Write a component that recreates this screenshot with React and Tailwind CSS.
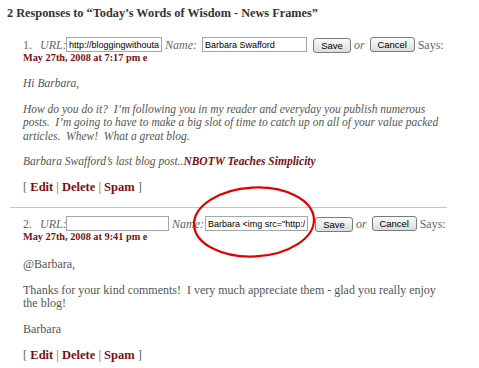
import React from 'react';

const serif = "font-['Liberation_Serif','Times_New_Roman',serif]";

function Field({ value, width }) {
  return (
    <input
      readOnly
      value={value}
      className={`h-[15px] ${width} border border-[#9ea6ae] bg-white px-[2px] text-[9px] leading-[13px] text-black font-['Liberation_Sans',Arial,sans-serif] outline-none`}
    />
  );
}

function Btn({ label, width }) {
  return (
    <span
      className={`inline-flex items-center justify-center h-[15px] ${width} rounded-[3px] border border-[#7a7a7a] bg-gradient-to-b from-[#fbfbfb] to-[#dcdcdc] text-[9.5px] leading-none text-black font-['Liberation_Sans',Arial,sans-serif]`}
    >
      {label}
    </span>
  );
}

function EditRow() {
  return (
    <p className="mt-[12px] h-[13px] leading-[13px] text-[12.5px] text-[#666]">
      [ <span className="font-bold text-[#7b1010]">Edit</span> | <span className="font-bold text-[#7b1010]">Delete</span> | <span className="font-bold text-[#7b1010]">Spam</span> ]
    </p>
  );
}

function FormRow({ num, url, name, urlW, nameLabel, nameW, saveGap }) {
  return (
    <div className="flex items-center h-[15px] text-[12px] text-[#666] whitespace-nowrap">
      <span className="w-[17px]">{num}.</span>
      <span className="italic w-[26px]">URL:</span>
      <Field value={url} width={urlW} />
      <span className={`italic ml-[3px] ${nameLabel}`}>Name:</span>
      <Field value={name} width={nameW} />
      <span className={saveGap}><Btn label="Save" width="w-[38px]" /></span>
      <span className="italic ml-[3px] mr-[5px]">or</span>
      <Btn label="Cancel" width="w-[45px]" />
      <span className="ml-[3px]">Says:</span>
    </div>
  );
}

function DateLine({ text }) {
  return (
    <p className="h-[12px] leading-[12px] text-[10.3px] font-bold text-[#7b1010]">{text}</p>
  );
}

export default function App() {
  return (
    <div className={`relative w-[479px] h-[368px] overflow-hidden bg-white ${serif}`}>
      <h2 className="mt-[5px] pl-[7px] h-4 leading-4 text-[12.3px] font-bold text-[#333] whitespace-nowrap">
        2 Responses to “Today’s Words of Wisdom - News Frames”
      </h2>

      <div className="pl-[23px] mt-[16px]">
        <FormRow
          num="1"
          url="http://bloggingwithoutablog.com"
          name="Barbara Swafford"
          urlW="w-[96px]"
          nameLabel="w-[37px]"
          nameW="w-[105px]"
          saveGap="ml-[6px]"
        />
        <DateLine text="May 27th, 2008 at 7:17 pm e" />
        <div className="italic text-[11.5px] leading-[13.5px] text-[#555] whitespace-nowrap">
          <p className="mt-[13px]">Hi Barbara,</p>
          <p className="mt-[12px]">
            How do you do it?&nbsp; I’m following you in my reader and everyday you publish numerous<br />
            posts.&nbsp; I’m going to have to make a big slot of time to catch up on all of your value packed<br />
            articles.&nbsp; Whew!&nbsp; What a great blog.
          </p>
          <p className="mt-[12px]">
            Barbara Swafford’s last blog post..<span className="font-bold text-[#7b1010]">NBOTW Teaches Simplicity</span>
          </p>
        </div>
        <EditRow />
      </div>

      <div className="ml-[10px] w-[437px] mt-[13.5px] border-t border-[#c8c8c8]" />

      <div className="pl-[23px] mt-[8px]">
        <FormRow
          num="2"
          url=""
          name={'Barbara <img src="http://'}
          urlW="w-[103px]"
          nameLabel="w-[33px]"
          nameW="w-[103px]"
          saveGap="ml-[7px]"
        />
        <DateLine text="May 27th, 2008 at 9:41 pm e" />
        <div className="text-[12px] leading-[13.5px] text-[#555] whitespace-nowrap">
          <p className="mt-[15px]">@Barbara,</p>
          <p className="mt-[12px]">
            Thanks for your kind comments!&nbsp; I very much appreciate them - glad you really enjoy<br />
            the blog!
          </p>
          <p className="mt-[12.5px]">Barbara</p>
        </div>
        <EditRow />
      </div>

      <svg className="absolute left-[190px] top-[184px]" width="130" height="78" viewBox="0 0 130 78">
        <ellipse cx="64" cy="38" rx="60" ry="34.5" fill="none" stroke="#e00000" strokeWidth="2.2" transform="rotate(-3 64 38)" />
      </svg>
    </div>
  );
}
